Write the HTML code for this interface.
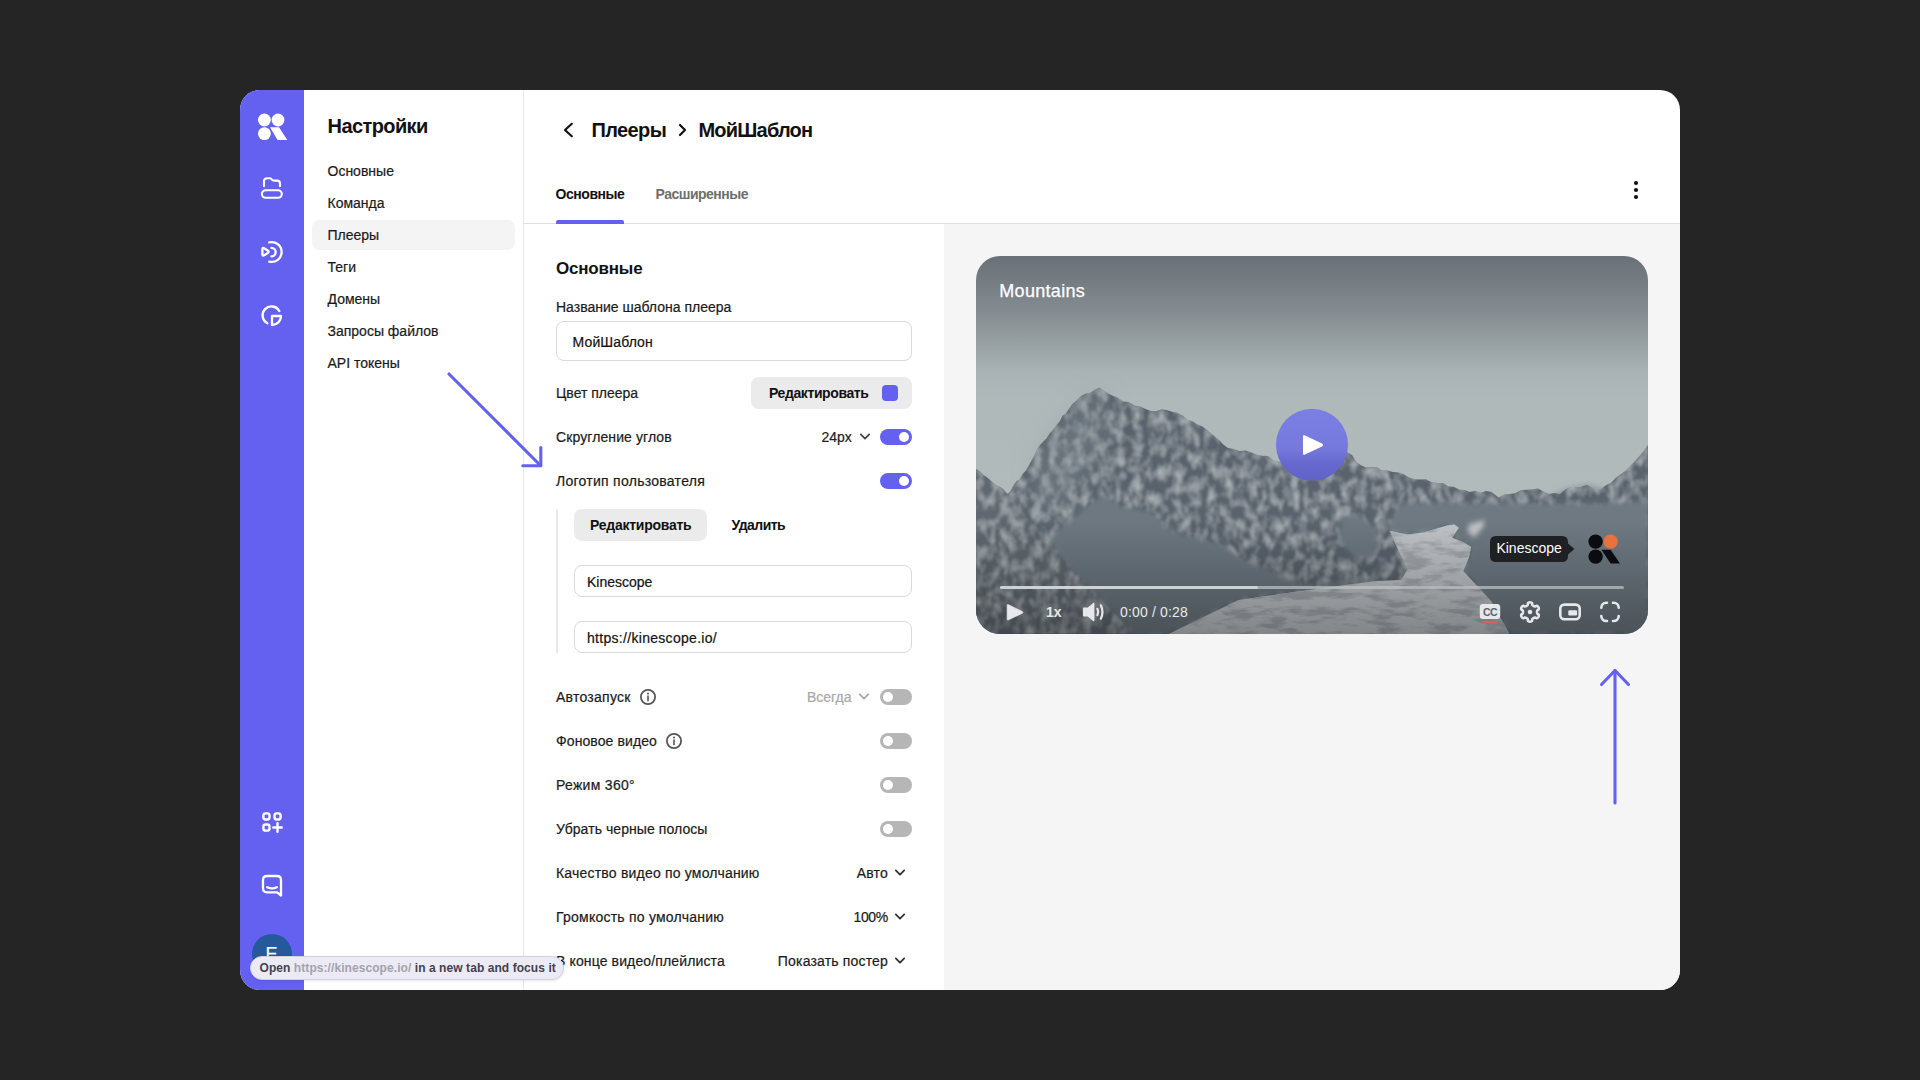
<!DOCTYPE html>
<html><head><meta charset="utf-8"><style>
html,body{margin:0;padding:0;width:1920px;height:1080px;overflow:hidden;background:#252525;}
body{position:relative;font-family:"Liberation Sans",sans-serif;}
.t{position:absolute;white-space:nowrap;}
.b{position:absolute;}
svg.b{overflow:visible}
</style></head><body>
<div class="b" style="left:240px;top:90px;width:1440px;height:900px;background:#fff;border-radius:20px;overflow:hidden"></div>
<div class="b" style="left:240px;top:90px;width:64px;height:900px;background:#6461F1;border-radius:20px 0 0 20px"></div>
<div class="b" style="left:944px;top:224px;width:736px;height:766px;background:#f5f5f5;border-radius:0 0 20px 0"></div>
<div class="b" style="left:523px;top:90px;width:1px;height:900px;background:#e8e8e8"></div>
<div class="b" style="left:524px;top:223px;width:1156px;height:1px;background:#dedede"></div>
<svg class="b" style="left:240px;top:90px" width="64" height="900" viewBox="240 90 64 900">
<g fill="#fff">
<circle cx="264.4" cy="120" r="6.4"/><circle cx="278" cy="120" r="6.4"/><circle cx="264.4" cy="133.6" r="6.4"/>
<path d="M270 127.3 H279 L287.3 140.1 H277.6 Z"/>
</g>
<g fill="none" stroke="#fff" stroke-width="2.1" stroke-linecap="round" stroke-linejoin="round">
<path d="M264 186.2 V181 Q264 178.2 267.5 178.2 H269.8 Q271 178.2 272 179.6 Q272.8 180.6 274 180.6 H277.2 Q280 180.6 280 183.5 V186.2"/>
<rect x="261.9" y="190.3" width="19.9" height="7.5" rx="3.75"/>
<path d="M262.4 249.2 Q262.4 247.3 264.2 248.2 L268 250.7 Q269.3 251.8 268 252.9 L264.2 255.3 Q262.4 256.3 262.4 254.3 Z" stroke-width="2.3"/>
<path d="M271.4 247.9 A4.25 4.25 0 0 1 271.4 256.4" stroke-width="2.3"/>
<path d="M269.3 242.4 A9.9 9.9 0 1 1 269.3 261.6" stroke-width="2.3"/>
<path d="M267.4 323.2 A8.9 8.9 0 1 1 279.3 311" stroke-width="2.4"/>
<path d="M272 316 H281 A9 9 0 0 1 272 325 Z" stroke-width="2.3"/>
<rect x="263.4" y="813.4" width="6.1" height="6.1" rx="2.2" stroke-width="2.4"/>
<rect x="274.5" y="813.4" width="6.1" height="6.1" rx="2.2" stroke-width="2.4"/>
<rect x="263.4" y="824.5" width="6.1" height="6.1" rx="2.2" stroke-width="2.4"/>
<path d="M277.5 823.3 V831.7 M273.3 827.5 H281.7" stroke-width="2.4"/>
<path d="M267 876 H277 Q281 876 281 880 V895.5 L277.2 892.3 H267 Q263 892.3 263 888.3 V880 Q263 876 267 876 Z" stroke-width="2.3"/>
<path d="M267.2 887.2 Q272 889.6 276.8 887.2" stroke-width="2.3"/>
</g>
<circle cx="272" cy="954" r="20" fill="#245a9c"/>
</svg>
<div class="t " style="left:265.5px;top:943.16px;font-size:18px;line-height:22px;font-weight:400;color:#fff;letter-spacing:0px;-webkit-text-stroke:0.2px currentColor;">E</div>
<div class="t " style="left:327.6px;top:114.27px;font-size:20px;line-height:25px;font-weight:700;color:#111;letter-spacing:-0.6px;">Настройки</div>
<div class="b" style="left:312px;top:220px;width:203px;height:30px;background:#f4f4f4;border-radius:8px"></div>
<div class="t " style="left:327.5px;top:162.35px;font-size:14px;line-height:18px;font-weight:400;color:#1a1a1a;letter-spacing:0px;-webkit-text-stroke:0.2px currentColor;">Основные</div>
<div class="t " style="left:327.5px;top:194.35px;font-size:14px;line-height:18px;font-weight:400;color:#1a1a1a;letter-spacing:0px;-webkit-text-stroke:0.2px currentColor;">Команда</div>
<div class="t " style="left:327.5px;top:226.35px;font-size:14px;line-height:18px;font-weight:400;color:#1a1a1a;letter-spacing:0px;-webkit-text-stroke:0.2px currentColor;">Плееры</div>
<div class="t " style="left:327.5px;top:258.35px;font-size:14px;line-height:18px;font-weight:400;color:#1a1a1a;letter-spacing:0px;-webkit-text-stroke:0.2px currentColor;">Теги</div>
<div class="t " style="left:327.5px;top:290.35px;font-size:14px;line-height:18px;font-weight:400;color:#1a1a1a;letter-spacing:0px;-webkit-text-stroke:0.2px currentColor;">Домены</div>
<div class="t " style="left:327.5px;top:322.35px;font-size:14px;line-height:18px;font-weight:400;color:#1a1a1a;letter-spacing:0px;-webkit-text-stroke:0.2px currentColor;">Запросы файлов</div>
<div class="t " style="left:327.5px;top:354.35px;font-size:14px;line-height:18px;font-weight:400;color:#1a1a1a;letter-spacing:0px;-webkit-text-stroke:0.2px currentColor;">API токены</div>
<svg class="b" style="left:523px;top:90px" width="1157" height="134" viewBox="523 90 1157 134">
<g fill="none" stroke="#111" stroke-width="2.2" stroke-linecap="round" stroke-linejoin="round">
<path d="M571.8 123.8 L565 130 L571.8 136.2"/>
<path d="M680 125 L685 130 L680 135"/>
</g>
<g fill="#111"><circle cx="1636" cy="183" r="2.1"/><circle cx="1636" cy="190" r="2.1"/><circle cx="1636" cy="197" r="2.1"/></g>
</svg>
<div class="t " style="left:591.5px;top:117.67px;font-size:20px;line-height:25px;font-weight:700;color:#111;letter-spacing:-0.62px;">Плееры</div>
<div class="t " style="left:698.5px;top:117.67px;font-size:20px;line-height:25px;font-weight:700;color:#111;letter-spacing:-0.8px;">МойШаблон</div>
<div class="t " style="left:555.5px;top:185.15px;font-size:14px;line-height:18px;font-weight:700;color:#111;letter-spacing:-0.45px;">Основные</div>
<div class="t " style="left:655.5px;top:185.15px;font-size:14px;line-height:18px;font-weight:700;color:#6e6e6e;letter-spacing:-0.5px;">Расширенные</div>
<div class="b" style="left:556px;top:220px;width:68px;height:4px;background:#6461F1;border-radius:2px 2px 0 0"></div>
<div class="t " style="left:556px;top:258.11px;font-size:17px;line-height:21px;font-weight:700;color:#111;letter-spacing:-0.2px;">Основные</div>
<div class="t " style="left:556px;top:297.55px;font-size:14px;line-height:18px;font-weight:400;color:#1a1a1a;letter-spacing:0px;-webkit-text-stroke:0.2px currentColor;">Название шаблона плеера</div>
<div class="b" style="left:556px;top:321px;width:356px;height:40px;border:1px solid #dadada;border-radius:8px;box-sizing:border-box"></div>
<div class="t " style="left:572.6px;top:332.55px;font-size:14px;line-height:18px;font-weight:400;color:#111;letter-spacing:0.1px;-webkit-text-stroke:0.2px currentColor;">МойШаблон</div>
<div class="t " style="left:556px;top:384.25px;font-size:14px;line-height:18px;font-weight:400;color:#1a1a1a;letter-spacing:0px;-webkit-text-stroke:0.2px currentColor;">Цвет плеера</div>
<div class="b" style="left:751px;top:377px;width:161px;height:32px;background:#ebebeb;border-radius:8px"></div>
<div class="t " style="left:769px;top:384.05px;font-size:14px;line-height:18px;font-weight:700;color:#111;letter-spacing:-0.4px;">Редактировать</div>
<div class="b" style="left:882px;top:385px;width:16px;height:16px;background:#6461F1;border-radius:4px"></div>
<div class="t " style="left:556px;top:428.05px;font-size:14px;line-height:18px;font-weight:400;color:#1a1a1a;letter-spacing:0.1px;-webkit-text-stroke:0.2px currentColor;">Скругление углов</div>
<div class="t " style="left:821.5px;top:428.05px;font-size:14px;line-height:18px;font-weight:400;color:#222;letter-spacing:0px;-webkit-text-stroke:0.2px currentColor;">24px</div>
<svg class="b" style="left:857.5px;top:431px" width="14" height="12" viewBox="857.5 431 14 12"><path d="M860.3 434.4 L864.5 438.6 L868.7 434.4" fill="none" stroke="#444" stroke-width="1.8" stroke-linecap="round" stroke-linejoin="round"/></svg>
<div class="b" style="left:880px;top:429px;width:32px;height:16px;background:#6461F1;border-radius:8px"></div><div class="b" style="left:899px;top:432px;width:10px;height:10px;border-radius:5px;background:#fff"></div>
<div class="t " style="left:556px;top:472.05px;font-size:14px;line-height:18px;font-weight:400;color:#1a1a1a;letter-spacing:0.27px;-webkit-text-stroke:0.2px currentColor;">Логотип пользователя</div>
<div class="b" style="left:880px;top:473px;width:32px;height:16px;background:#6461F1;border-radius:8px"></div><div class="b" style="left:899px;top:476px;width:10px;height:10px;border-radius:5px;background:#fff"></div>
<div class="b" style="left:556px;top:509px;width:2px;height:144px;background:#e8e8e8"></div>
<div class="b" style="left:574px;top:509px;width:133px;height:32px;background:#ebebeb;border-radius:8px"></div>
<div class="t " style="left:590px;top:516.25px;font-size:14px;line-height:18px;font-weight:700;color:#111;letter-spacing:-0.25px;">Редактировать</div>
<div class="t " style="left:731.5px;top:516.25px;font-size:14px;line-height:18px;font-weight:700;color:#111;letter-spacing:-0.55px;">Удалить</div>
<div class="b" style="left:574px;top:565px;width:338px;height:32px;border:1px solid #dadada;border-radius:8px;box-sizing:border-box"></div>
<div class="t " style="left:587px;top:572.65px;font-size:14px;line-height:18px;font-weight:400;color:#111;letter-spacing:0px;-webkit-text-stroke:0.2px currentColor;">Kinescope</div>
<div class="b" style="left:574px;top:621px;width:338px;height:32px;border:1px solid #dadada;border-radius:8px;box-sizing:border-box"></div>
<div class="t " style="left:587px;top:628.65px;font-size:14px;line-height:18px;font-weight:400;color:#111;letter-spacing:0.3px;-webkit-text-stroke:0.2px currentColor;">https://kinescope.io/</div>
<div class="t " style="left:556px;top:687.85px;font-size:14px;line-height:18px;font-weight:400;color:#1a1a1a;letter-spacing:0.25px;-webkit-text-stroke:0.2px currentColor;">Автозапуск</div>
<svg class="b" style="left:638.5px;top:688px" width="18" height="18" viewBox="638.5 688 18 18"><circle cx="647.5" cy="697" r="7.1" fill="none" stroke="#555" stroke-width="1.8"/><path d="M647.5 696 V700.8" stroke="#555" stroke-width="1.6" stroke-linecap="round"/><circle cx="647.5" cy="693.4" r="1" fill="#555"/></svg>
<div class="t " style="left:807px;top:687.85px;font-size:14px;line-height:18px;font-weight:400;color:#a8a8a8;letter-spacing:0px;-webkit-text-stroke:0.2px currentColor;">Всегда</div>
<svg class="b" style="left:857px;top:691px" width="14" height="12" viewBox="857 691 14 12"><path d="M859.8 694.4 L864 698.6 L868.2 694.4" fill="none" stroke="#a8a8a8" stroke-width="1.8" stroke-linecap="round" stroke-linejoin="round"/></svg>
<div class="b" style="left:880px;top:689px;width:32px;height:16px;background:#b6b6b6;border-radius:8px"></div><div class="b" style="left:883px;top:692px;width:10px;height:10px;border-radius:5px;background:#fff"></div>
<div class="t " style="left:556px;top:731.85px;font-size:14px;line-height:18px;font-weight:400;color:#1a1a1a;letter-spacing:0.1px;-webkit-text-stroke:0.2px currentColor;">Фоновое видео</div>
<svg class="b" style="left:664.5px;top:732px" width="18" height="18" viewBox="664.5 732 18 18"><circle cx="673.5" cy="741" r="7.1" fill="none" stroke="#555" stroke-width="1.8"/><path d="M673.5 740 V744.8" stroke="#555" stroke-width="1.6" stroke-linecap="round"/><circle cx="673.5" cy="737.4" r="1" fill="#555"/></svg>
<div class="b" style="left:880px;top:733px;width:32px;height:16px;background:#b6b6b6;border-radius:8px"></div><div class="b" style="left:883px;top:736px;width:10px;height:10px;border-radius:5px;background:#fff"></div>
<div class="t " style="left:556px;top:775.85px;font-size:14px;line-height:18px;font-weight:400;color:#1a1a1a;letter-spacing:0.3px;-webkit-text-stroke:0.2px currentColor;">Режим 360°</div>
<div class="b" style="left:880px;top:777px;width:32px;height:16px;background:#b6b6b6;border-radius:8px"></div><div class="b" style="left:883px;top:780px;width:10px;height:10px;border-radius:5px;background:#fff"></div>
<div class="t " style="left:556px;top:819.85px;font-size:14px;line-height:18px;font-weight:400;color:#1a1a1a;letter-spacing:0.07px;-webkit-text-stroke:0.2px currentColor;">Убрать черные полосы</div>
<div class="b" style="left:880px;top:821px;width:32px;height:16px;background:#b6b6b6;border-radius:8px"></div><div class="b" style="left:883px;top:824px;width:10px;height:10px;border-radius:5px;background:#fff"></div>
<div class="t " style="left:556px;top:863.85px;font-size:14px;line-height:18px;font-weight:400;color:#1a1a1a;letter-spacing:0.2px;-webkit-text-stroke:0.2px currentColor;">Качество видео по умолчанию</div>
<div class="t" style="right:1032px;top:863.85px;font-size:14px;line-height:18px;font-weight:400;color:#1a1a1a;letter-spacing:0.2px;text-align:right;-webkit-text-stroke:0.2px currentColor;">Авто</div>
<svg class="b" style="left:893px;top:867px" width="14" height="12" viewBox="893 867 14 12"><path d="M895.8 870.4 L900 874.6 L904.2 870.4" fill="none" stroke="#333" stroke-width="1.8" stroke-linecap="round" stroke-linejoin="round"/></svg>
<div class="t " style="left:556px;top:907.85px;font-size:14px;line-height:18px;font-weight:400;color:#1a1a1a;letter-spacing:0.23px;-webkit-text-stroke:0.2px currentColor;">Громкость по умолчанию</div>
<div class="t" style="right:1032px;top:907.85px;font-size:14px;line-height:18px;font-weight:400;color:#1a1a1a;letter-spacing:-0.3px;text-align:right;-webkit-text-stroke:0.2px currentColor;">100%</div>
<svg class="b" style="left:893px;top:911px" width="14" height="12" viewBox="893 911 14 12"><path d="M895.8 914.4 L900 918.6 L904.2 914.4" fill="none" stroke="#333" stroke-width="1.8" stroke-linecap="round" stroke-linejoin="round"/></svg>
<div class="t " style="left:556px;top:951.85px;font-size:14px;line-height:18px;font-weight:400;color:#1a1a1a;letter-spacing:0.13px;-webkit-text-stroke:0.2px currentColor;">В конце видео/плейлиста</div>
<div class="t" style="right:1032px;top:951.85px;font-size:14px;line-height:18px;font-weight:400;color:#1a1a1a;letter-spacing:0.17px;text-align:right;-webkit-text-stroke:0.2px currentColor;">Показать постер</div>
<svg class="b" style="left:893px;top:955px" width="14" height="12" viewBox="893 955 14 12"><path d="M895.8 958.4 L900 962.6 L904.2 958.4" fill="none" stroke="#333" stroke-width="1.8" stroke-linecap="round" stroke-linejoin="round"/></svg>
<svg class="b" style="left:0;top:0" width="1920" height="1080" viewBox="0 0 1920 1080">
<g fill="none" stroke="#6461F1" stroke-width="3.1" stroke-linecap="round" stroke-linejoin="round">
<path d="M449 374 L540.5 465.5"/><path d="M540.8 447.5 V465.8 H522.8"/>
<path d="M1615 670.5 V803"/><path d="M1601.5 684.5 L1615 670.5 L1628.5 684.5"/>
</g></svg>
<svg class="b" style="left:0;top:0" width="1920" height="1080" viewBox="0 0 1920 1080"><defs><linearGradient id="sky" x1="0" y1="256" x2="0" y2="634" gradientUnits="userSpaceOnUse"><stop offset="0" stop-color="#6a7077"/><stop offset="0.09" stop-color="#798086"/><stop offset="0.17" stop-color="#899195"/><stop offset="0.25" stop-color="#9ca5a8"/><stop offset="0.31" stop-color="#aab3b5"/><stop offset="0.38" stop-color="#b0b9ba"/><stop offset="1" stop-color="#b4bdbd"/></linearGradient>
<linearGradient id="btm" x1="0" y1="520" x2="0" y2="634" gradientUnits="userSpaceOnUse">
<stop offset="0" stop-color="#000" stop-opacity="0"/><stop offset="1" stop-color="#000" stop-opacity="0.32"/></linearGradient>
<linearGradient id="pb" x1="0" y1="409" x2="0" y2="481" gradientUnits="userSpaceOnUse">
<stop offset="0" stop-color="#7b7ee3"/><stop offset="0.55" stop-color="#7679dc"/><stop offset="0.75" stop-color="#6668cf"/><stop offset="1" stop-color="#6163c8"/></linearGradient>
<clipPath id="vc"><rect x="976" y="256" width="672" height="378" rx="24"/></clipPath>
<filter id="bl" x="-20%" y="-20%" width="140%" height="140%"><feGaussianBlur stdDeviation="2.5"/></filter>
<filter id="bl3" x="-50%" y="-50%" width="200%" height="200%"><feGaussianBlur stdDeviation="12"/></filter>
<filter id="rock" x="976" y="256" width="672" height="378" filterUnits="userSpaceOnUse">
<feTurbulence type="fractalNoise" baseFrequency="0.12 0.075" numOctaves="4" seed="11" result="n"/>
<feColorMatrix in="n" type="matrix" values="0 0 0 0 0.5  0 0 0 0 0.54  0 0 0 0 0.57  1.6 0 0 0 -0.62" result="sn"/>
<feGaussianBlur in="sn" stdDeviation="1.1" result="snb"/>
<feComposite in="snb" in2="SourceGraphic" operator="in" result="snc"/>
<feMerge><feMergeNode in="SourceGraphic"/><feMergeNode in="snc"/></feMerge>
</filter>
<filter id="snowt" x="976" y="256" width="672" height="378" filterUnits="userSpaceOnUse">
<feTurbulence type="fractalNoise" baseFrequency="0.035 0.12" numOctaves="4" seed="5" result="n"/>
<feColorMatrix in="n" type="matrix" values="0 0 0 0 0.36  0 0 0 0 0.39  0 0 0 0 0.42  -4.5 0 0 0 2.45" result="sn"/>
<feGaussianBlur in="sn" stdDeviation="0.7" result="snb"/>
<feComposite in="snb" in2="SourceGraphic" operator="in" result="snc"/>
<feMerge><feMergeNode in="SourceGraphic"/><feMergeNode in="snc"/></feMerge>
</filter>
</defs>
<g clip-path="url(#vc)">
<rect x="976" y="256" width="672" height="378" fill="url(#sky)"/>
<polygon points="1546.0,498.0 1566.0,488.0 1588.0,484.0 1616.0,492.0 1631.0,501.0" fill="#939da3" filter="url(#bl)"/>
<polygon points="976.0,469.0 979.9,471.3 983.9,475.4 987.8,478.0 991.8,481.8 995.7,485.0 999.6,486.4 1003.6,489.3 1007.5,494.0 1010.5,491.1 1013.5,485.2 1016.5,481.1 1019.5,479.6 1022.5,473.9 1025.5,471.1 1028.5,466.0 1031.4,460.7 1034.2,455.9 1037.1,449.1 1040.0,445.0 1043.3,441.4 1046.6,438.2 1049.9,433.1 1053.2,429.8 1056.5,425.0 1059.6,421.5 1062.7,415.4 1065.8,413.6 1068.9,409.0 1072.0,404.6 1076.7,400.3 1081.3,395.8 1086.0,393.6 1090.6,392.7 1095.1,389.4 1099.7,387.4 1104.2,390.7 1108.8,393.8 1113.3,395.9 1117.8,397.8 1123.4,401.4 1128.9,401.9 1134.5,405.4 1140.0,406.5 1145.6,408.9 1150.9,410.9 1156.2,411.2 1161.4,409.3 1166.7,410.0 1172.0,411.7 1177.5,412.8 1183.0,415.8 1187.7,420.1 1192.5,421.2 1197.2,424.5 1202.0,426.3 1206.7,429.7 1210.9,433.3 1215.0,436.6 1219.2,440.1 1223.3,444.5 1227.5,447.8 1233.5,449.0 1239.6,451.0 1245.6,450.6 1251.2,452.5 1256.7,454.7 1262.2,455.8 1267.8,456.0 1273.9,460.4 1280.0,461.7 1285.3,462.1 1290.7,460.4 1296.0,462.5 1301.3,462.7 1306.7,462.4 1312.0,461.0 1317.1,460.0 1322.3,459.3 1327.4,456.4 1332.6,457.2 1337.7,455.2 1342.9,453.0 1348.0,452.5 1352.2,455.3 1356.3,462.0 1360.5,465.0 1365.8,467.6 1371.0,467.0 1376.5,466.9 1382.0,470.5 1387.5,470.5 1393.0,472.0 1398.4,472.4 1403.8,474.3 1409.2,477.4 1414.6,479.2 1420.0,479.5 1425.9,479.2 1431.8,482.2 1437.7,483.0 1443.1,482.9 1448.5,486.5 1453.8,486.7 1459.2,489.8 1464.6,490.0 1470.0,491.9 1475.4,490.8 1480.7,492.8 1486.1,491.0 1491.5,492.0 1498.7,497.5 1504.1,494.4 1509.5,494.0 1515.2,493.2 1520.9,490.3 1526.6,489.7 1532.3,489.3 1538.0,488.5 1543.5,491.6 1549.0,494.0 1554.4,492.9 1559.8,494.0 1566.0,489.0 1572.3,487.0 1579.5,487.2 1586.7,485.0 1591.2,487.1 1595.7,490.3 1601.0,489.1 1606.4,485.0 1611.3,482.6 1616.2,477.4 1621.1,474.0 1626.0,470.5 1629.6,466.6 1633.2,463.1 1636.8,459.0 1640.4,454.9 1644.0,450.8 1648.0,445.0 1648.0,634.0 976.0,634.0" fill="#5a646d" filter="url(#rock)"/>
<polygon points="1036.0,456.0 1066.0,416.0 1096.0,391.0 1111.0,406.0 1096.0,456.0 1071.0,506.0 1036.0,518.0" fill="#8a949a" opacity="0.35" filter="url(#bl3)"/>
<g filter="url(#bl)">
<polygon points="1102.0,495.0 1121.0,507.0 1151.0,512.5 1168.5,530.0 1194.8,538.8 1221.0,544.0 1238.5,558.0 1273.5,572.0 1291.0,582.5 1312.0,586.0 1338.0,582.0 1376.0,581.0 1312.0,589.5 1238.5,600.0 1168.5,634.0 1133.5,634.0 1098.5,596.5 1067.0,565.0 1051.0,544.0 1054.8,533.5 1074.0,517.8" fill="#6d7881"/>
<polygon points="1341.0,518.0 1358.0,514.0 1378.0,531.0 1374.0,556.0 1356.0,558.0 1339.0,541.0" fill="#6d7881"/>
<polygon points="1401.0,503.0 1446.0,503.0 1516.0,504.0 1576.0,504.0 1616.0,503.0 1648.0,501.0 1648.0,634.0 1509.5,634.0 1491.5,601.6 1476.7,585.6 1463.3,571.1 1468.9,557.8 1471.1,546.7 1463.3,542.2 1452.2,537.8 1458.9,527.8 1446.7,525.6 1424.4,532.2 1407.8,534.4 1390.0,531.0 1394.0,514.0" fill="#6e7982"/>
</g>
<polygon points="1390.0,531.0 1407.8,534.4 1424.4,532.2 1446.7,525.6 1454.4,524.4 1458.9,527.8 1452.2,537.8 1463.3,542.2 1471.1,546.7 1468.9,557.8 1463.3,571.1 1476.7,585.6 1491.5,601.6 1509.5,634.0 1168.5,634.0 1238.5,600.0 1312.0,589.5 1376.0,581.0 1401.1,580.0 1407.8,568.9 1396.7,546.7" fill="#c0c4c7" filter="url(#snowt)"/>
<polygon points="1468.9,524.4 1484.4,520.0 1483.3,526.7 1474.4,537.8 1467.8,532.2" fill="#c0c4c7" filter="url(#bl)"/>
<polygon points="976.0,469.0 1007.5,494.0 1051.0,544.0 1067.0,565.0 1098.5,596.5 1133.5,634.0 976.0,634.0" fill="#5e6770" filter="url(#rock)"/>
<rect x="976" y="520" width="672" height="114" fill="url(#btm)"/>
</g>
<circle cx="1312" cy="444.7" r="36" fill="url(#pb)"/>
<path d="M1305 435.5 Q1303 434.2 1303 436.8 V453.2 Q1303 455.8 1305 454.5 L1322 446.6 Q1324.2 444.9 1322 443.4 Z" fill="#fff"/>
<rect x="1000" y="586" width="624" height="3" rx="1.5" fill="#b9bfc3" fill-opacity="0.75"/>
<rect x="1000" y="586" width="258" height="3" rx="1.5" fill="#d4d8db" fill-opacity="0.85"/>
<path d="M1008.5 604.8 Q1007.2 604 1007.2 605.6 V619 Q1007.2 620.6 1008.5 619.8 L1022.3 613.2 Q1023.4 612.4 1022.3 611.6 Z" fill="#e6e8eb" stroke="#e6e8eb" stroke-width="0.8" stroke-linejoin="round"/>
<path d="M1083.8 608.3 H1088 L1093.6 603.5 V620.5 L1088 615.7 H1083.8 Z" fill="#e6e8eb" stroke="#e6e8eb" stroke-width="1.6" stroke-linejoin="round"/>
<path d="M1097.4 608.8 Q1098.9 612 1097.4 615.2 M1100.8 605.3 Q1104.2 612 1100.8 618.7" fill="none" stroke="#e6e8eb" stroke-width="2.2" stroke-linecap="round"/>
<rect x="1479.8" y="603.9" width="20.4" height="15" rx="3.2" fill="#e6e8eb"/>
<text x="1490.1" y="615.8" font-family="Liberation Sans" font-weight="700" font-size="10.5" fill="#5f6368" text-anchor="middle" letter-spacing="-0.4">CC</text>
<rect x="1482" y="621" width="16" height="2.6" fill="#e05a5f"/>
<g fill="none" stroke="#e6e8eb" stroke-width="2.6" stroke-linejoin="round" stroke-linecap="round">
<path d="M1537.00 612.00 L1537.01 612.24 L1537.02 612.49 L1537.06 612.74 L1537.11 613.00 L1537.18 613.27 L1537.29 613.55 L1537.51 613.87 L1538.62 614.47 L1538.79 614.86 L1538.84 615.22 L1538.83 615.57 L1538.77 615.91 L1538.68 616.23 L1538.56 616.55 L1538.40 616.85 L1538.22 617.13 L1538.01 617.40 L1537.77 617.64 L1537.50 617.86 L1537.21 618.05 L1536.87 618.19 L1536.45 618.23 L1535.37 617.57 L1534.99 617.54 L1534.69 617.59 L1534.42 617.66 L1534.17 617.74 L1533.94 617.84 L1533.71 617.95 L1533.50 618.06 L1533.29 618.19 L1533.09 618.33 L1532.89 618.48 L1532.69 618.65 L1532.49 618.85 L1532.30 619.09 L1532.13 619.44 L1532.17 620.70 L1531.92 621.04 L1531.63 621.27 L1531.33 621.43 L1531.00 621.55 L1530.67 621.63 L1530.34 621.68 L1530.00 621.70 L1529.66 621.68 L1529.33 621.63 L1529.00 621.55 L1528.67 621.43 L1528.37 621.27 L1528.08 621.04 L1527.83 620.70 L1527.87 619.44 L1527.70 619.09 L1527.51 618.85 L1527.31 618.65 L1527.11 618.48 L1526.91 618.33 L1526.71 618.19 L1526.50 618.06 L1526.29 617.95 L1526.06 617.84 L1525.83 617.74 L1525.58 617.66 L1525.31 617.59 L1525.01 617.54 L1524.63 617.57 L1523.55 618.23 L1523.13 618.19 L1522.79 618.05 L1522.50 617.86 L1522.23 617.64 L1521.99 617.40 L1521.78 617.13 L1521.60 616.85 L1521.44 616.55 L1521.32 616.23 L1521.23 615.91 L1521.17 615.57 L1521.16 615.22 L1521.21 614.86 L1521.38 614.47 L1522.49 613.87 L1522.71 613.55 L1522.82 613.27 L1522.89 613.00 L1522.94 612.74 L1522.98 612.49 L1522.99 612.24 L1523.00 612.00 L1522.99 611.76 L1522.98 611.51 L1522.94 611.26 L1522.89 611.00 L1522.82 610.73 L1522.71 610.45 L1522.49 610.13 L1521.38 609.53 L1521.21 609.14 L1521.16 608.78 L1521.17 608.43 L1521.23 608.09 L1521.32 607.77 L1521.44 607.45 L1521.60 607.15 L1521.78 606.87 L1521.99 606.60 L1522.23 606.36 L1522.50 606.14 L1522.79 605.95 L1523.13 605.81 L1523.55 605.77 L1524.63 606.43 L1525.01 606.46 L1525.31 606.41 L1525.58 606.34 L1525.83 606.26 L1526.06 606.16 L1526.29 606.05 L1526.50 605.94 L1526.71 605.81 L1526.91 605.67 L1527.11 605.52 L1527.31 605.35 L1527.51 605.15 L1527.70 604.91 L1527.87 604.56 L1527.83 603.30 L1528.08 602.96 L1528.37 602.73 L1528.67 602.57 L1529.00 602.45 L1529.33 602.37 L1529.66 602.32 L1530.00 602.30 L1530.34 602.32 L1530.67 602.37 L1531.00 602.45 L1531.33 602.57 L1531.63 602.73 L1531.92 602.96 L1532.17 603.30 L1532.13 604.56 L1532.30 604.91 L1532.49 605.15 L1532.69 605.35 L1532.89 605.52 L1533.09 605.67 L1533.29 605.81 L1533.50 605.94 L1533.71 606.05 L1533.94 606.16 L1534.17 606.26 L1534.42 606.34 L1534.69 606.41 L1534.99 606.46 L1535.37 606.43 L1536.45 605.77 L1536.87 605.81 L1537.21 605.95 L1537.50 606.14 L1537.77 606.36 L1538.01 606.60 L1538.22 606.87 L1538.40 607.15 L1538.56 607.45 L1538.68 607.77 L1538.77 608.09 L1538.83 608.43 L1538.84 608.78 L1538.79 609.14 L1538.62 609.53 L1537.51 610.13 L1537.29 610.45 L1537.18 610.73 L1537.11 611.00 L1537.06 611.26 L1537.02 611.51 L1537.01 611.76 Z" stroke-width="2.5"/>
<rect x="1560.3" y="604.6" width="19.4" height="14.7" rx="4"/>
<path d="M1601.3 607.8 A5 5 0 0 1 1606.3 602.8 H1607 M1613 602.8 H1613.7 A5 5 0 0 1 1618.7 607.8 M1618.7 616 A5 5 0 0 1 1613.7 621 H1613 M1607 621 H1606.3 A5 5 0 0 1 1601.3 616"/>
</g>
<circle cx="1530" cy="612" r="2.3" fill="#e6e8eb"/>
<rect x="1568.3" y="610.3" width="8.8" height="5.2" rx="1.3" fill="#e6e8eb"/>
<path d="M1496 536 H1562 Q1568 536 1568 542 V543.5 L1574.4 549 L1568 554.5 V556 Q1568 562 1562 562 H1496 Q1490 562 1490 556 V542 Q1490 536 1496 536 Z" fill="#1f2024"/>
<text x="1496.4" y="553.3" font-family="Liberation Sans" font-size="14" fill="#fff">Kinescope</text>
<g fill="#0b0c10"><circle cx="1595.6" cy="541.6" r="7.2"/><circle cx="1595.6" cy="556.6" r="7.2"/><path d="M1601.5 549.7 H1610.6 L1620 563.5 H1610.6 Z"/></g>
<circle cx="1610.6" cy="541.6" r="7.2" fill="#e8713d"/>
</svg><div class="t" style="left:999.3px;top:280.3px;font-size:18px;line-height:22px;font-weight:400;color:#fff;letter-spacing:0.3px;-webkit-text-stroke:0.25px #fff">Mountains</div><div class="t" style="left:1046px;top:603px;font-size:14px;line-height:18px;font-weight:700;color:#e6e8eb">1x</div><div class="t" style="left:1120px;top:603px;font-size:14px;line-height:18px;font-weight:400;color:#e6e8eb;letter-spacing:0.15px">0:00 / 0:28</div>
<div class="b" style="left:250px;top:956px;width:314px;height:24px;background:#ecebf5;border:1px solid #d2d1da;border-radius:12px;box-sizing:border-box;box-shadow:0 1px 3px rgba(0,0,0,.10)"></div>
<div class="t " style="left:259.5px;top:961.34px;font-size:12px;line-height:15px;font-weight:700;color:#43424d;letter-spacing:0.07px;">Open <span style="color:#a3a2ad">https://kinescope.io/</span> in a new tab and focus it</div>
</body></html>
